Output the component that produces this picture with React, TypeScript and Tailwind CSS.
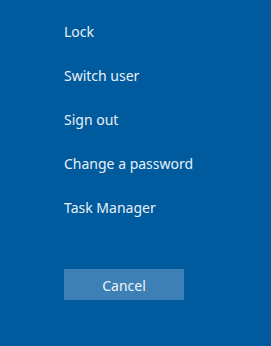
const options = ['Lock', 'Switch user', 'Sign out', 'Change a password', 'Task Manager']

export default function App() {
  return (
    <div
      className="w-[271px] h-[346px] bg-[#005a9e] text-[#e8f0f7] pl-[64px] pt-[9px] overflow-hidden"
      style={{ fontFamily: '"Noto Sans", "Open Sans", sans-serif' }}
    >
      <div className="flex flex-col">
        {options.map((o) => (
          <div key={o} className="h-[44px] flex items-center text-[14px]">
            {o}
          </div>
        ))}
      </div>
      <button className="mt-[40px] w-[120px] h-[31px] pt-[2px] bg-[#3d80b5] text-[14px] text-[#eef4f9] flex items-center justify-center">
        Cancel
      </button>
    </div>
  )
}
